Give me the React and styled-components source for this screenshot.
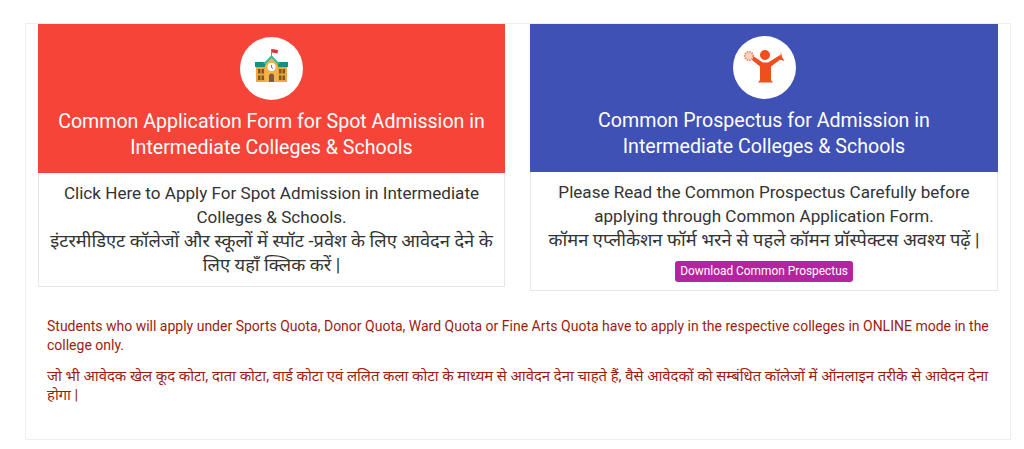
import React from 'react';
import styled, { createGlobalStyle } from 'styled-components';

const GlobalStyle = createGlobalStyle`
  html, body {
    margin: 0;
    padding: 0;
    background: #fff;
  }
  body {
    font-family: Roboto, "Noto Sans", sans-serif;
    color: #333;
  }
`;

const Panel = styled.div`
  box-sizing: border-box;
  width: 986px;
  height: 417px;
  margin: 23px 0 0 25px;
  padding: 0 12px;
  border: 1px solid #eee;
`;
const CardRow = styled.div`
  display: grid;
  grid-template-columns: 467px 468px;
  column-gap: 25px;
  align-items: start;
`;
const Card = styled.div`
  border: 1px solid #e8e8e8;
  border-top: 0;
  text-align: center;
`;
const CardHeader = styled.div`
  background: ${(p) => p.$bg};
  height: ${(p) => p.$height}px;
  margin: 0 -1px;
  padding-top: ${(p) => p.$top}px;
  box-sizing: border-box;
  color: #fff;
`;
const IconCircle = styled.div`
  width: 63px;
  height: 63px;
  margin: 0 auto 9px;
  border-radius: 50%;
  background: #fff;
  display: flex;
  align-items: center;
  justify-content: center;
`;
const IconSvg = styled.svg`
  margin-bottom: ${(p) => p.$lift}px;
`;
const CardTitle = styled.h3`
  margin: 0;
  font-size: 19.6px;
  font-weight: 400;
  line-height: 26px;
`;
const CardBody = styled.div`
  padding: ${(p) => p.$top}px 10px ${(p) => p.$bottom}px;
  font-size: 17.08px;
  line-height: 24px;
`;
const Hindi = styled.span`
  font-size: ${(p) => p.$size}px;
`;
const DownloadButton = styled.a`
  display: inline-block;
  margin-top: 9px;
  padding: 0 5px;
  height: 21px;
  line-height: 21px;
  background: #b5249f;
  border-radius: 3px;
  color: #fff;
  font-size: 11.9px;
`;
const Notes = styled.div`
  padding: 26px 7px 0 9px;
  color: #9c1c12;
  font-size: 14px;
  line-height: 19px;
`;
const Note = styled.p`
  margin: 0 0 ${(p) => p.$gap || 0}px;
`;

const SchoolIcon = () => (
  <IconSvg $lift={6} width="33" height="33" viewBox="0 0 33 33">
    <path d="M16.500 8V0" stroke="#8a5a3a" strokeWidth="0.8" />
    <path d="M17 0l6 1-.5 3.500-5.500-1z" fill="#d8352f" />
    <rect x="1" y="18" width="31" height="15" fill="#f0a63a" />
    <path d="M0 13h33v5H0z" fill="#17917f" />
    <path d="M8 15l8.500-9 8.500 9z" fill="#3fb5a3" />
    <path d="M10 33V16l6.500-7 6.500 7v17z" fill="#f4b24a" />
    <circle cx="16.500" cy="18" r="4" fill="#fff" />
    <path d="M16.500 16v2.500l1.500 1" stroke="#555" strokeWidth="0.8" fill="none" />
    <path d="M14 33v-6a2.500 2.500 0 0 1 5 0v6z" fill="#7d5a3c" />
    <g fill="#7a5a22">
      <rect x="3" y="20" width="2.500" height="4.500" />
      <rect x="6.500" y="20" width="2.500" height="4.500" />
      <rect x="3" y="26.500" width="2.500" height="4.500" />
      <rect x="6.500" y="26.500" width="2.500" height="4.500" />
      <rect x="24" y="20" width="2.500" height="4.500" />
      <rect x="27.500" y="20" width="2.500" height="4.500" />
      <rect x="24" y="26.500" width="2.500" height="4.500" />
      <rect x="27.500" y="26.500" width="2.500" height="4.500" />
    </g>
  </IconSvg>
);

const ReaderIcon = () => (
  <IconSvg $lift={2} width="42" height="35" viewBox="0 0 42 35">
    <circle cx="22" cy="6" r="5" fill="#ee4f1c" />
    <path d="M10 7l10 6.500h5L37 6l1 4-10 7.500V31l2 2.500H15l2-2.500V17.500L9 11z" fill="#ee4f1c" />
    <path d="M38 3l1 5 2.500 4-5-1.500z" fill="#ee4f1c" />
    <circle cx="6" cy="7" r="4.300" fill="#fbd0c0" stroke="#f2805c" strokeWidth="1.600" strokeDasharray="1.500 1" />
  </IconSvg>
);

const App = () => (
  <>
    <GlobalStyle />
    <Panel>
      <CardRow>
        <Card>
          <CardHeader $bg="#f74438" $height={149} $top={13}>
            <IconCircle><SchoolIcon /></IconCircle>
            <CardTitle>Common Application Form for Spot Admission in<br />Intermediate Colleges &amp; Schools</CardTitle>
          </CardHeader>
          <CardBody $top={8} $bottom={9}>
            Click Here to Apply For Spot Admission in Intermediate Colleges &amp; Schools.<br />
            <Hindi $size={18.25}>इंटरमीडिएट कॉलेजों और स्कूलों में स्पॉट -प्रवेश के लिए आवेदन देने के लिए यहाँ क्लिक करें |</Hindi>
          </CardBody>
        </Card>
        <Card>
          <CardHeader $bg="#3f51b5" $height={148} $top={12}>
            <IconCircle><ReaderIcon /></IconCircle>
            <CardTitle>Common Prospectus for Admission in<br />Intermediate Colleges &amp; Schools</CardTitle>
          </CardHeader>
          <CardBody $top={8} $bottom={8}>
            Please Read the Common Prospectus Carefully before applying through Common Application Form.<br />
            <Hindi $size={18.25}>कॉमन एप्लीकेशन फॉर्म भरने से पहले कॉमन प्रॉस्पेक्टस अवश्य पढ़ें |</Hindi><br />
            <DownloadButton>Download Common Prospectus</DownloadButton>
          </CardBody>
        </Card>
      </CardRow>
      <Notes>
        <Note $gap={12}>Students who will apply under Sports Quota, Donor Quota, Ward Quota or Fine Arts Quota have to apply in the respective colleges in ONLINE mode in the college only.</Note>
        <Note><Hindi $size={14.85}>जो भी आवेदक खेल कूद कोटा, दाता कोटा, वार्ड कोटा एवं ललित कला कोटा के माध्यम से आवेदन देना चाहते हैं, वैसे आवेदकों को सम्बंधित कॉलेजों में ऑनलाइन तरीके से आवेदन देना होगा |</Hindi></Note>
      </Notes>
    </Panel>
  </>
);

export default App;
